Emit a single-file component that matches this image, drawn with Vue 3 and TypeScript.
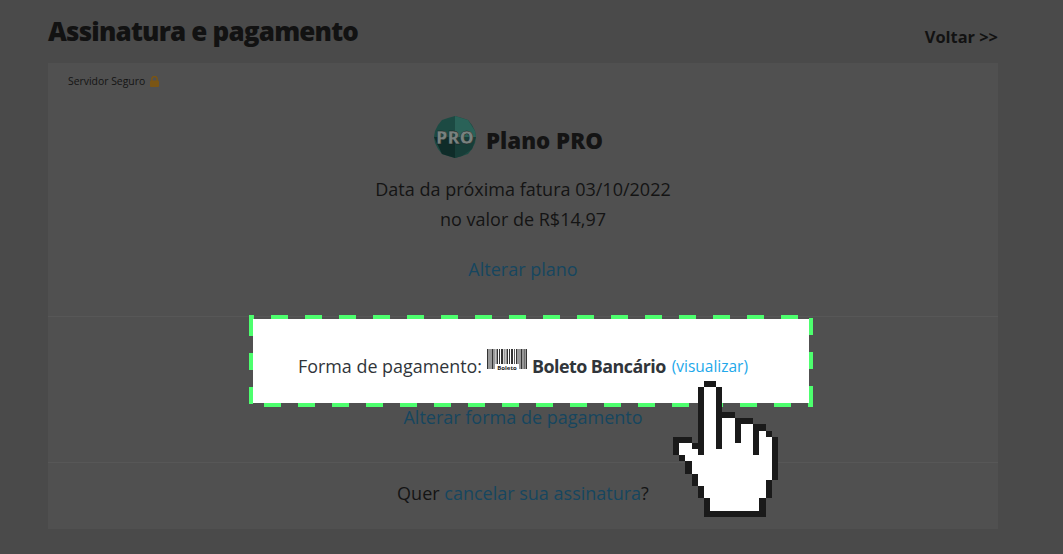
<script setup lang="ts">
const bars = [
  [0, 1.5], [2.5, 1], [4.5, 2], [7.5, 0.8], [9.5, 1.5], [12, 1], [14, 2.2], [17.5, 0.8], [19.5, 1.5],
  [22, 1], [24, 2], [27, 0.8], [29, 1.5], [31.5, 1], [33.5, 2], [36.5, 1.2], [38.5, 1.5],
]

// hand cursor, in cells of 6.17px
const handFill =
  '5,1 7,1 7,11 8,11 8,6 10,6 10,10 11,10 11,7 13,7 13,12 14,12 14,8 15,8 15,9 16,9 16,16 15,16 15,19 14,19 14,21 6,21 6,19 5,19 5,17 4,17 4,15 3,15 3,13 2,13 2,12 1,12 1,10 3,10 3,11 4,11 4,12 5,12'
const handLines = [
  [5, 0, 2, 1], [4, 1, 1, 11], [7, 1, 1, 10], [8, 5, 2, 1], [10, 6, 1, 4], [11, 6, 2, 1], [13, 7, 1, 5],
  [14, 7, 1, 1], [15, 8, 1, 1], [16, 9, 1, 7], [15, 16, 1, 3], [14, 19, 1, 3], [5, 21, 9, 1], [5, 19, 1, 2],
  [4, 17, 1, 2], [3, 15, 1, 2], [2, 13, 1, 2], [1, 12, 1, 1], [0, 9, 1, 3], [1, 9, 2, 1], [3, 10, 1, 1],
]
</script>

<template>
  <div class="page">
    <header class="top">
      <h1>Assinatura e pagamento</h1>
      <a class="back">Voltar &gt;&gt;</a>
    </header>

    <main class="card">
      <section class="plan">
        <div class="secure">
          Servidor Seguro
          <svg width="9" height="11" viewBox="0 0 9 11">
            <path d="M1.8 5V3.2a2.7 2.7 0 0 1 5.4 0V5" fill="none" stroke="#7a5514" stroke-width="1.5" />
            <rect x="0" y="4.5" width="9" height="6.5" rx="1" fill="#7a5514" />
          </svg>
        </div>
        <div class="plan-name">
          <svg class="badge" width="42" height="42" viewBox="0 0 42 42">
            <polygon
              points="21,0 28,2 34,4 38,9 41,15 42,21 41,27 38,33 34,38 28,40 21,42 14,40 8,38 4,33 1,27 0,21 1,15 4,9 8,4 14,2"
              fill="#1c4a43"
            />
            <polygon points="21,0 34,4 41,15 42,21 21,21" fill="#2a6258" />
            <polygon points="21,21 42,21 38,33 28,40 21,42" fill="#173d38" />
            <polygon points="0,21 21,21 21,42 8,38" fill="#0f2c29" />
            <text x="21" y="27.5" text-anchor="middle" class="badge-text">PRO</text>
          </svg>
          <strong>Plano PRO</strong>
        </div>
        <p class="invoice">Data da próxima fatura 03/10/2022</p>
        <p class="invoice">no valor de R$14,97</p>
        <a class="link change-plan">Alterar plano</a>
      </section>

      <section class="payment">
        <a class="link">Alterar forma de pagamento</a>
      </section>

      <section class="cancel">Quer <a class="link">cancelar sua assinatura</a>?</section>
    </main>

    <div class="highlight">
      <svg class="dashes" width="564" height="92" viewBox="0 0 564 92">
        <line x1="0" y1="2" x2="564" y2="2" stroke-dashoffset="-22" />
        <line x1="0" y1="90" x2="564" y2="90" stroke-dashoffset="-15" />
        <line x1="2" y1="0" x2="2" y2="92" stroke-dashoffset="-4" />
        <line x1="562" y1="0" x2="562" y2="92" stroke-dashoffset="-3" />
      </svg>
      <div class="method">
        <span>Forma de pagamento:</span>
        <svg class="barcode" width="40" height="22" viewBox="0 0 40 22">
          <rect v-for="b in bars" :key="b[0]" :x="b[0]" y="0" :width="b[1]" height="20" fill="#333" />
          <rect x="8" y="15" width="24" height="7" fill="#fff" />
          <text x="20" y="21" text-anchor="middle" class="barcode-text">Boleto</text>
        </svg>
        <strong>Boleto Bancário</strong>
        <a class="view">(visualizar)</a>
      </div>
    </div>

    <svg class="hand" width="111" height="136" viewBox="0 0 18 22" shape-rendering="crispEdges">
      <polygon :points="handFill" fill="#fff" />
      <rect v-for="(r, i) in handLines" :key="i" :x="r[0]" :y="r[1]" :width="r[2]" :height="r[3]" fill="#1a1a1a" />
    </svg>
  </div>
</template>

<style scoped>
.page {
  position: relative;
  width: 1063px;
  height: 554px;
  overflow: hidden;
  box-sizing: border-box;
  padding: 0 65px 0 48px;
  background: #4a4a4a;
  color: #141414;
  font-family: "Open Sans", sans-serif;
}

.top {
  display: flex;
  justify-content: space-between;
  align-items: flex-end;
  height: 63px;
  padding-bottom: 15px;
  box-sizing: border-box;
}

h1 {
  position: relative;
  top: 1px;
  margin: 0;
  font-size: 26px;
  line-height: 36px;
  font-weight: 800;
  letter-spacing: -0.82px;
  color: #121212;
}

.back {
  font-size: 16.4px;
  line-height: 22px;
  font-weight: 700;
  color: #121212;
}

.card {
  height: 466px;
  background: #505050;
  text-align: center;
  font-size: 18px;
}

.plan {
  height: 254px;
  box-sizing: border-box;
  padding-top: 11px;
  border-bottom: 1px solid #575757;
}

.secure {
  display: flex;
  align-items: center;
  gap: 5px;
  padding-left: 20px;
  font-size: 10.4px;
  line-height: 14px;
}

.plan-name {
  display: flex;
  justify-content: center;
  align-items: center;
  gap: 10px;
  margin-top: 28px;
  padding-right: 9px;
  height: 42px;
  font-size: 22.3px;
}

.plan-name strong {
  font-weight: 800;
  position: relative;
  top: 3px;
}

.badge-text {
  font-size: 18px;
  font-weight: 800;
  fill: #78827f;
  stroke: #1a1a1a;
  stroke-width: 0.4px;
}

.invoice {
  margin: 0;
  line-height: 30px;
  font-size: 18px;
}

.plan-name + .invoice {
  margin-top: 16px;
}

.link {
  color: #16465f;
}

.change-plan {
  display: block;
  margin-top: 20px;
  line-height: 30px;
}

.payment {
  height: 146px;
  box-sizing: border-box;
  padding-top: 87px;
  line-height: 26px;
  border-bottom: 1px solid #575757;
}

.cancel {
  padding-top: 17px;
  line-height: 26px;
}

.highlight {
  position: absolute;
  left: 249px;
  top: 315px;
  width: 564px;
  height: 92px;
  box-sizing: border-box;
  padding: 4px;
  background-clip: content-box;
  background-color: #fff;
  display: flex;
  align-items: center;
}

.dashes {
  position: absolute;
  left: 0;
  top: 0;
}

.dashes line {
  stroke: #4dff6e;
  stroke-width: 4;
  stroke-dasharray: 17 17;
}

.method {
  display: flex;
  align-items: center;
  margin: 10px 0 0 45px;
  font-size: 17.9px;
  color: #30353a;
  white-space: nowrap;
}

.barcode {
  margin: -12px 5px 0 5px;
}

.barcode-text {
  font-size: 6px;
  font-weight: 700;
  fill: #222;
}

.method strong {
  font-weight: 700;
  letter-spacing: -0.55px;
}

.view {
  margin-left: 6px;
  font-size: 15.5px;
  color: #22a8ea;
}

.hand {
  position: absolute;
  left: 673px;
  top: 381px;
}
</style>

<style>
html,
body {
  margin: 0;
  overflow: hidden;
}
</style>
